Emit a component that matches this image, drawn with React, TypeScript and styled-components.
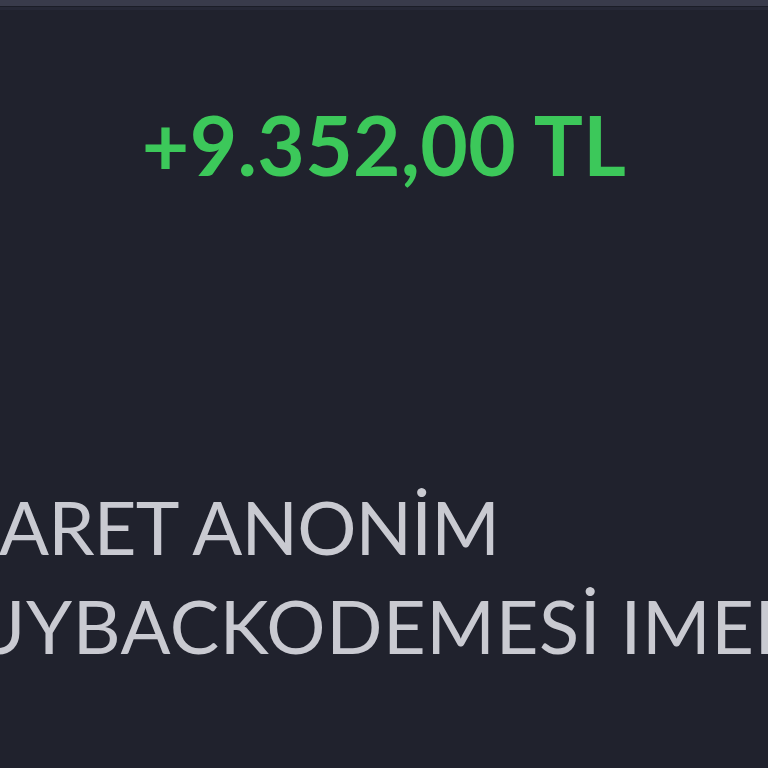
import React from "react";
import styled, { createGlobalStyle } from "styled-components";

const Global = createGlobalStyle`
  html, body { margin: 0; padding: 0; background: #20222d; }
  #root { width: 768px; height: 768px; overflow: hidden; }
`;

const Page = styled.div`
  width: 768px;
  height: 768px;
  background: #20222d;
  display: flex;
  flex-direction: column;
  overflow: hidden;
  font-family: Lato, "Noto Sans", sans-serif;
`;

const TopBar = styled.div`
  height: 6px;
  background: #393b4b;
  border-bottom: 1px solid #1b1d27;
  box-shadow: 0 3px 0 #262836;
  flex: none;
`;

const Amount = styled.div`
  margin-top: 87px;
  text-align: center;
  color: #3cc85a;
  font-size: 82px;
  font-weight: 700;
  line-height: 100px;
  letter-spacing: 0.3px;
`;

const Details = styled.div`
  margin-top: 283px;
  display: flex;
  flex-direction: column;
`;

const Line = styled.div<{ $shift: number; $track: number }>`
  color: #c9cad1;
  font-size: 74px;
  font-weight: 400;
  line-height: 99px;
  white-space: nowrap;
  margin-left: ${(p) => p.$shift}px;
  letter-spacing: ${(p) => p.$track}px;
`;

export default function App() {
  return (
    <>
      <Global />
      <Page>
        <TopBar />
        <Amount>+9.352,00 TL</Amount>
        <Details>
          <Line $shift={-1} $track={-0.8}>ARET ANONİM</Line>
          <Line $shift={-29} $track={0.6}>UYBACKODEMESİ IMEI</Line>
        </Details>
      </Page>
    </>
  );
}
